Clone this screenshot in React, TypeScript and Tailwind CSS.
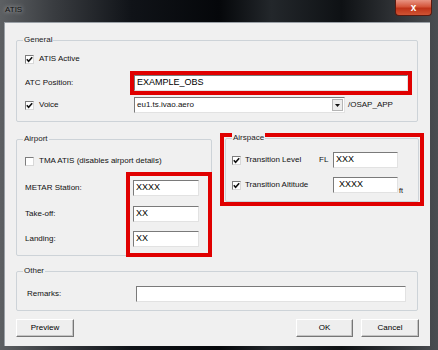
import React from 'react';

const font = { fontFamily: '"Liberation Sans", Arial, sans-serif' };

const Check: React.FC<{ checked?: boolean }> = ({ checked }) => (
  <span className="w-[9px] h-[9px] shrink-0 bg-white border-t border-l border-[#7d7d7d] border-b border-r border-b-[#d8d8d8] border-r-[#d8d8d8] flex items-center justify-center">
    {checked && (
      <svg width="7" height="7" viewBox="0 0 7 7">
        <path d="M0.8 3.2 L2.6 5.2 L6.2 1.2" stroke="#111" strokeWidth="1.6" fill="none" />
      </svg>
    )}
  </span>
);

const Field: React.FC<{ value?: string; className?: string }> = ({ value, className = '' }) => (
  <div
    className={`h-[16px] bg-white border-t border-l border-[#7a7a7a] border-b border-r border-b-[#e2e2e2] border-r-[#e2e2e2] flex items-center pl-[2px] text-[9px] text-black ${className}`}
  >
    {value}
  </div>
);

const Group: React.FC<{ title: string; className?: string; children: React.ReactNode }> = ({ title, className = '', children }) => (
  <div className={`relative border border-[#cdd3d8] rounded-[2px] ${className}`}>
    <span className="absolute -top-[6px] left-[6px] px-[1px] bg-[#f0f0f0] text-[8px] leading-[10px] text-[#222]">{title}</span>
    {children}
  </div>
);

const Button: React.FC<{ label: string; className?: string }> = ({ label, className = '' }) => (
  <div
    className={`h-[18px] bg-[#eeeeee] border-t border-l border-white border-b border-r border-b-[#767676] border-r-[#767676] shadow-[inset_-1px_-1px_0_#c4c4c4] flex items-center justify-center text-[8px] text-black ${className}`}
  >
    {label}
  </div>
);

export default function App() {
  return (
    <div
      className="w-[438px] h-[350px] overflow-hidden flex flex-col bg-[linear-gradient(90deg,#5d6063_0%,#3a3d41_12%,#101318_30%,#05070a_50%,#23272b_62%,#0e1114_78%,#4a4d51_100%)]"
      style={font}
    >
      {/* Title bar */}
      <div className="h-[22px] shrink-0 flex items-start justify-between pl-[5px] pr-[6px]">
        <span className="mt-[5px] text-[8px] leading-[10px] text-[#111] [text-shadow:0_0_4px_#d8d8d8]">ATIS</span>
        <div className="w-[37px] h-[16px] rounded-b-[4px] border border-t-0 border-[#5a1a10] bg-[linear-gradient(180deg,#e89482_0%,#d4553a_45%,#bf3318_55%,#cf5434_100%)] flex items-center justify-center">
          <span className="text-white text-[10px] font-bold leading-none">x</span>
        </div>
      </div>

      {/* Client area */}
      <div className="ml-[4px] mr-[8px] h-[324px] bg-[#f0f0f0] border-l border-t border-[#9aa0a6] pl-[11px] pt-[17px] text-[8px] text-[#111]">
        {/* General */}
        <Group title="General" className="w-[402px] pl-[8px] pt-[10px] pb-[8px]">
          <div className="h-[16px] flex items-center gap-[5px]">
            <Check checked />
            <span>ATIS Active</span>
          </div>
          <div className="mt-[8px] h-[16px] flex items-center">
            <span className="w-[109px]">ATC Position:</span>
            <Field value="EXAMPLE_OBS" className="w-[274px] outline-4 outline-[#e00000] text-[9.5px]" />
          </div>
          <div className="mt-[6px] h-[16px] flex items-center">
            <div className="w-[109px] flex items-center gap-[5px]">
              <Check checked />
              <span>Voice</span>
            </div>
            <div className="w-[211px] h-[16px] bg-white border-t border-l border-[#7a7a7a] border-b border-r border-b-[#e2e2e2] border-r-[#e2e2e2] flex items-center justify-between pl-[2px] pr-px">
              <span className="text-[8px]">eu1.ts.ivao.aero</span>
              <span className="w-[11px] h-[12px] bg-[#ececec] border border-[#b5b5b5] flex items-center justify-center">
                <svg width="5" height="3" viewBox="0 0 5 3">
                  <path d="M0 0 H5 L2.5 3 Z" fill="#111" />
                </svg>
              </span>
            </div>
            <span className="ml-[3px]">/OSAP_APP</span>
          </div>
        </Group>

        {/* Airport + Airspace */}
        <div className="mt-[11px] flex items-start">
          <Group title="Airport" className="mt-[6px] w-[196px] h-[117px] pl-[8px] pt-[13px]">
            <div className="h-[16px] flex items-center gap-[5px]">
              <Check />
              <span>TMA ATIS (disables airport details)</span>
            </div>
            <div className="mt-[11px] h-[16px] flex items-center">
              <span className="w-[108px]">METAR Station:</span>
              <Field value="XXXX" className="w-[66px]" />
            </div>
            <div className="mt-[10px] h-[16px] flex items-center">
              <span className="w-[108px]">Take-off:</span>
              <Field value="XX" className="w-[66px]" />
            </div>
            <div className="mt-[9px] h-[16px] flex items-center">
              <span className="w-[108px]">Landing:</span>
              <Field value="XX" className="w-[66px]" />
            </div>
            {/* annotation */}
            <div className="absolute left-[109px] top-[32px] w-[86px] h-[85px] border-4 border-[#e00000] pointer-events-none" />
          </Group>

          <div className="ml-[8px] w-[204px] border-4 border-[#e00000] px-px pt-px">
            <Group title="Airspace" className="w-[194px] h-[64px] pl-[6px] pt-[13px]">
              <div className="h-[16px] flex items-center">
                <div className="w-[87px] flex items-center gap-[4px]">
                  <Check checked />
                  <span>Transition Level</span>
                </div>
                <span className="w-[14px]">FL</span>
                <Field value="XXX" className="w-[65px]" />
              </div>
              <div className="mt-[9px] h-[16px] flex items-center">
                <div className="w-[101px] flex items-center gap-[4px]">
                  <Check checked />
                  <span>Transition Altitude</span>
                </div>
                <Field value="XXXX" className="w-[65px] pl-[5px]" />
                <span className="self-end ml-px text-[7px] leading-[8px] -mb-[2px] text-[#111]">ft</span>
              </div>
            </Group>
          </div>
        </div>

        {/* Other */}
        <Group title="Other" className="mt-[15px] w-[402px] h-[40px] pl-[10px] pt-[14px]">
          <div className="h-[16px] flex items-center">
            <span className="w-[109px]">Remarks:</span>
            <Field className="w-[270px]" />
          </div>
        </Group>

        {/* Buttons */}
        <div className="mt-[8px] w-[403px] flex items-center">
          <Button label="Preview" className="w-[58px]" />
          <Button label="OK" className="ml-auto w-[57px]" />
          <Button label="Cancel" className="ml-[8px] w-[58px]" />
        </div>
      </div>
    </div>
  );
}
